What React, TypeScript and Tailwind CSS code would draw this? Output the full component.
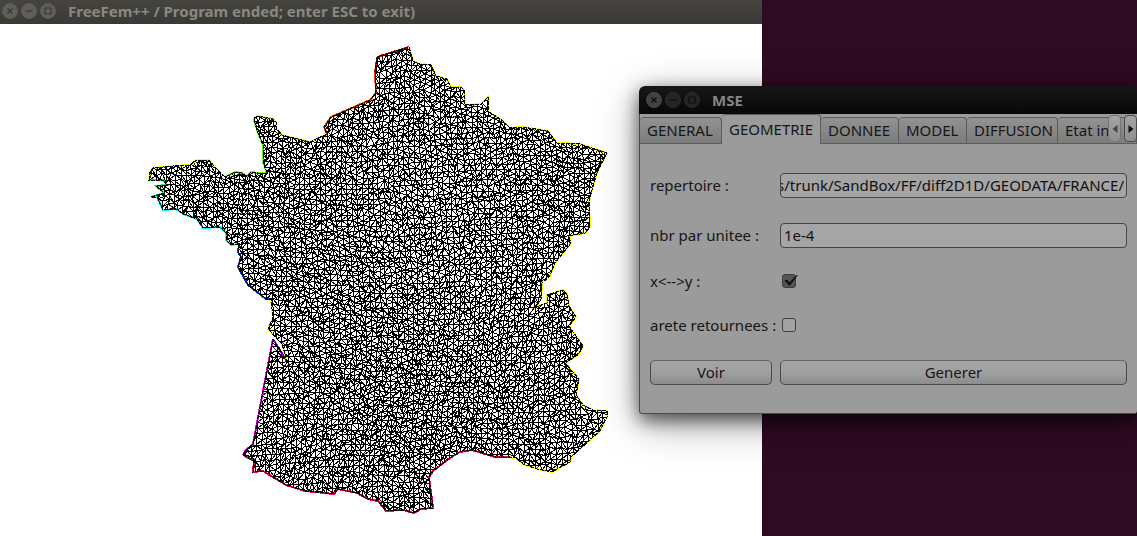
import React, { useEffect, useRef, useState } from 'react'
import clsx from 'clsx'

type Point = [number, number]

interface Border {
  color: string
  points: Point[]
}

// borders are chained clockwise, each one starts where the previous one ends
const borders: Border[] = [
  {
    color: '#ffff00',
    points: [[149, 180], [150, 172], [153, 168], [173, 166], [190, 165], [196, 160], [209, 160], [214, 166], [225, 177]],
  },
  {
    color: '#66ff00',
    points: [[235, 172], [242, 173], [247, 176], [251, 172], [258, 173], [267, 173], [263, 162], [263, 145], [258, 133], [254, 120], [255, 117]],
  },
  {
    color: '#ffff00',
    points: [[258, 116], [273, 119], [276, 122], [276, 128], [282, 135], [310, 142], [327, 134]],
  },
  {
    color: '#ff4d00',
    points: [[324, 127], [331, 117], [347, 110], [370, 100], [376, 93], [375, 73]],
  },
  {
    color: '#ff0000',
    points: [[377, 58], [380, 56], [393, 52], [409, 47]],
  },
  {
    color: '#ffff00',
    points: [
      [413, 61], [420, 64], [431, 65], [436, 76], [447, 79], [451, 87], [461, 87], [464, 90], [465, 105], [481, 104],
      [488, 97], [489, 112], [502, 120], [510, 128], [523, 127], [548, 131], [557, 143], [580, 144], [607, 153],
      [597, 173], [592, 190], [589, 202], [590, 227], [585, 233], [569, 236], [571, 243], [555, 263], [550, 276],
      [542, 283], [541, 299], [536, 307], [547, 303], [547, 295], [563, 290], [567, 294], [569, 306], [576, 317],
      [569, 326], [583, 346], [578, 355], [565, 363], [579, 379], [576, 395], [583, 405], [593, 410], [607, 411],
      [607, 417], [600, 431], [571, 457], [570, 462], [552, 472], [537, 469], [523, 464], [516, 458], [508, 457],
    ],
  },
  {
    color: '#ff0066',
    points: [
      [495, 457], [472, 450], [460, 452], [450, 458], [433, 471], [429, 477], [433, 508], [421, 509], [414, 513],
      [403, 510], [386, 511], [378, 501], [368, 499], [357, 493], [338, 489], [334, 494], [305, 491], [286, 485],
      [263, 471], [253, 472], [254, 461], [243, 455],
    ],
  },
  {
    color: '#ff00ff',
    points: [[245, 451], [253, 444], [260, 407], [267, 370], [273, 339]],
  },
  { color: '#9900ff', points: [[287, 361]] },
  {
    color: '#ffff00',
    points: [[282, 344], [268, 329], [273, 318], [271, 299]],
  },
  {
    color: '#0040ff',
    points: [[266, 299], [248, 285], [238, 267], [241, 257], [238, 252], [239, 244]],
  },
  {
    color: '#00ffff',
    points: [[231, 245], [226, 240], [226, 233], [220, 227], [203, 228], [197, 219], [183, 214], [176, 209], [163, 210], [157, 197], [151, 197], [164, 193]],
  },
  {
    color: '#00ff66',
    points: [[156, 186], [167, 185], [163, 180], [149, 180]],
  },
]

const toPath = (points: Point[]) => 'M' + points.map((p) => p.join(' ')).join('L')

const outline = toPath(borders.flatMap((b) => b.points)) + 'Z'

const noise = (i: number, j: number, seed: number) => {
  const n = Math.sin(i * 127.1 + j * 311.7 + seed * 74.7) * 43758.5453
  return n - Math.floor(n)
}

// triangulation of the bounding box, clipped by the outline when drawn
function buildMesh() {
  const node = (i: number, j: number) => {
    const x = 138 + i * 5.2 + 5 * Math.sin(j / 11 + i / 17) + (noise(i, j, 1) - 0.5) * 2.6
    const y = 38 + j * 5.2 + (i % 2) * 2 + 5 * Math.sin(i / 11 - j / 15) + (noise(i, j, 2) - 0.5) * 2.6
    return `${Math.round(x)} ${Math.round(y)}`
  }
  let d = ''
  for (let j = 0; j < 94; j++) {
    for (let i = 0; i < 93; i++) {
      const a = node(i, j)
      const b = node(i + 1, j)
      const c = node(i, j + 1)
      const e = node(i + 1, j + 1)
      d += `M${b}L${a}L${c}`
      d += noise(i, j, 3) > 0.5 ? `M${a}L${e}` : `M${b}L${c}`
    }
  }
  return d
}

const mesh = buildMesh()

function MeshPlot() {
  return (
    <svg width="762" height="512" viewBox="0 24 762 512" className="block" role="img" aria-label="Mesh" shapeRendering="crispEdges" fill="none">
      <clipPath id="domain">
        <path d={outline} />
      </clipPath>
      {borders.map((b, i) => {
        const prev = borders[(i + borders.length - 1) % borders.length].points
        return <path key={i} d={toPath([prev[prev.length - 1], ...b.points])} stroke={b.color} strokeWidth="2" />
      })}
      <path d={mesh} stroke="#000" clipPath="url(#domain)" />
      <path d={outline} stroke="#000" strokeDasharray="4 1" />
    </svg>
  )
}

function WindowButtons({ active = false }: { active?: boolean }) {
  const base = 'flex size-4 items-center justify-center rounded-full border'
  const idle = active ? 'border-[#2b2b2b] bg-[#242424] text-[#0c0c0c]' : 'border-[#5c5b56] bg-[#5f5e59] text-[#3a3935]'
  return (
    <div className="flex gap-[3px]">
      <button aria-label="Close" className={clsx(base, active ? 'border-[#484848] bg-[#424242] text-[#0c0c0c]' : idle)}>
        <svg width="8" height="8" viewBox="0 0 8 8" stroke="currentColor" strokeWidth="1.3">
          <path d="M1.5 1.5l5 5M6.5 1.5l-5 5" />
        </svg>
      </button>
      <button aria-label="Minimize" className={clsx(base, idle)}>
        <svg width="8" height="8" viewBox="0 0 8 8" stroke="currentColor" strokeWidth="1.2">
          <path d="M0.5 4h7" />
        </svg>
      </button>
      <button aria-label="Maximize" className={clsx(base, idle)}>
        <svg width="8" height="8" viewBox="0 0 8 8" fill="none" stroke="currentColor" strokeWidth="1.2">
          <path d="M1 1h6v6h-6z" />
        </svg>
      </button>
    </div>
  )
}

const tabs = [
  { label: 'GENERAL', width: 'w-[82px]' },
  { label: 'GEOMETRIE', width: 'w-[99px]' },
  { label: 'DONNEE', width: 'w-[78px]' },
  { label: 'MODEL', width: 'w-[68px]' },
  { label: 'DIFFUSION', width: 'w-[91px]' },
  { label: 'Etat in...', width: 'w-[79px]' },
]

const inputClass = 'h-[25px] w-full rounded-[4px] border border-[#464646] bg-[#a5a5a5] pb-px text-[#111] outline-none'
const buttonClass =
  'h-[25px] rounded-[5px] border border-[#4a4a4a] border-t-[#666] bg-linear-to-b from-[#a4a4a4] via-[#a0a0a0] to-[#8c8c8c]'

function Checkbox({ id, defaultChecked = false }: { id: string; defaultChecked?: boolean }) {
  return (
    <span className="relative ml-[2px] flex size-[14px]">
      <input
        id={id}
        type="checkbox"
        defaultChecked={defaultChecked}
        className="peer size-[14px] appearance-none rounded-[3px] border border-[#3e3e3e] bg-[#a2a2a2] checked:bg-[#555]"
      />
      <svg className="pointer-events-none absolute left-0 top-0 hidden peer-checked:block" width="17" height="14" viewBox="0 0 17 14" fill="#111">
        <path d="M2.5 6.5L5 5.5L7.5 8.5L14 1.5L16 1L8 11.5H7z" />
      </svg>
    </span>
  )
}

function ScrollButton({ dir }: { dir: 'left' | 'right' }) {
  const left = dir === 'left'
  return (
    <button
      aria-label={left ? 'Scroll left' : 'Scroll right'}
      className={clsx(
        'flex h-[27px] w-[13px] items-center justify-center rounded-[4px] border bg-linear-to-b from-[#a4a4a4] to-[#8e8e8e]',
        left ? 'border-[#757575] text-[#444]' : 'border-[#4c4c4c] text-[#111]',
      )}
    >
      <svg width="6" height="8" viewBox="0 0 6 8" fill="currentColor" className="shrink-0">
        <path d={left ? 'M5.5 0v8L0.5 4z' : 'M0.5 0v8L5.5 4z'} />
      </svg>
    </button>
  )
}

function MseWindow() {
  const [current, setCurrent] = useState('GEOMETRIE')
  const pathRef = useRef<HTMLInputElement>(null)

  // keep the end of a long path in view
  useEffect(() => {
    if (pathRef.current) pathRef.current.scrollLeft = pathRef.current.scrollWidth
  }, [])

  return (
    <section className="absolute left-[639px] right-0 top-[86px] rounded-t-[6px] rounded-b-[3px] shadow-[0_10px_40px_0_rgba(0,0,0,0.35),0_6px_18px_0_rgba(0,0,0,0.6)]">
      <header className="flex h-7 items-center gap-3 rounded-t-[6px] bg-linear-to-b from-[#171717] to-[#080808] pl-[7px]">
        <WindowButtons active />
        <h2 className="font-bold text-[#858585]">MSE</h2>
      </header>

      <div className="rounded-b-[3px] border-b border-l border-[#4a4a4a] bg-[#9b9b9b]">
        <div className="relative">
          <div role="tablist" className="flex h-[30px] items-end border-b border-[#5c5c5c]">
            {tabs.map((tab) => (
              <button
                key={tab.label}
                role="tab"
                aria-selected={current === tab.label}
                onClick={() => setCurrent(tab.label)}
                className={clsx(
                  'shrink-0 rounded-t-[4px] border-t border-r border-[#5c5c5c] pb-[2px] pl-[7px] text-left whitespace-nowrap',
                  tab.width,
                  current === tab.label ? '-mb-px h-[30px] bg-[#9b9b9b]' : 'h-[26px] bg-linear-to-b from-[#929292] to-[#7c7c7c]',
                )}
              >
                {tab.label}
              </button>
            ))}
          </div>
          <div className="absolute right-0 top-px flex gap-[3px]">
            <ScrollButton dir="left" />
            <ScrollButton dir="right" />
          </div>
        </div>

        <form
          onSubmit={(e) => e.preventDefault()}
          className="grid grid-cols-[122px_1fr] grid-rows-[50px_50px_42px_46px_48px] items-center gap-x-2 px-[10px] pt-4 pb-[17px]"
        >
          <label htmlFor="repertoire">repertoire :</label>
          <input ref={pathRef} id="repertoire" className={clsx(inputClass, 'pr-[2px]')} defaultValue="s/trunk/SandBox/FF/diff2D1D/GEODATA/FRANCE/" />

          <label htmlFor="nbr">nbr par unitee :</label>
          <input id="nbr" className={clsx(inputClass, 'px-[3px]')} defaultValue="1e-4" />

          <label htmlFor="swap">x&lt;--&gt;y :</label>
          <Checkbox id="swap" defaultChecked />

          <label htmlFor="arete" className="whitespace-nowrap">arete retournees :</label>
          <Checkbox id="arete" />

          <button type="button" className={buttonClass}>Voir</button>
          <button type="button" className={buttonClass}>Generer</button>
        </form>
      </div>
    </section>
  )
}

export default function App() {
  return (
    <main className="relative min-h-screen overflow-hidden bg-[#2f0a23] font-['Noto_Sans',sans-serif] text-[15px] leading-5 text-[#161616]">
      <section className="min-h-screen w-[67%] overflow-hidden bg-white">
        <header className="flex h-6 items-center gap-3 bg-linear-to-b from-[#45443f] to-[#3a3935] pb-[2px] pl-[2px]">
          <WindowButtons />
          <h1 className="whitespace-nowrap font-bold text-[#8a8881]">FreeFem++ / Program ended; enter ESC to exit)</h1>
        </header>
        <MeshPlot />
      </section>

      <MseWindow />
    </main>
  )
}
